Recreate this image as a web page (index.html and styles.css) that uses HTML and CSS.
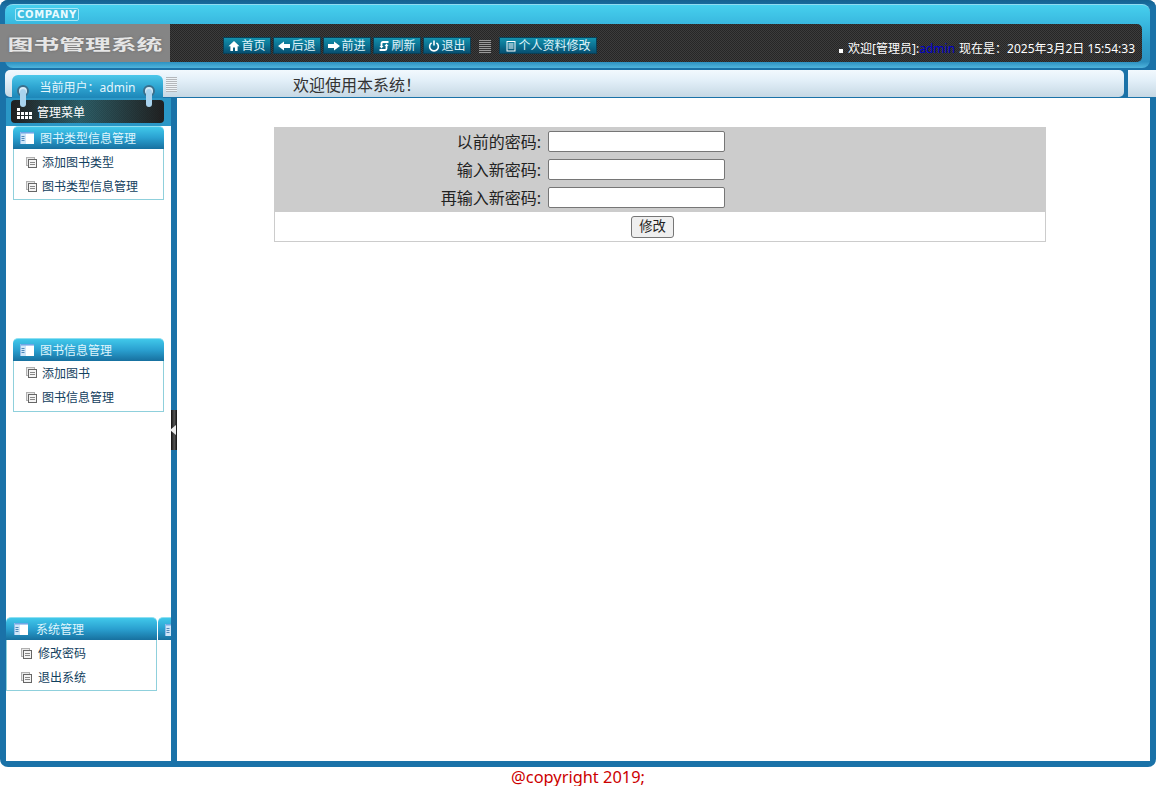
FILE: index.html
```html
<!DOCTYPE html>
<html lang="zh-CN">
<head>
<meta charset="utf-8">
<title>图书管理系统</title>
<link rel="stylesheet" href="styles.css">
</head>
<body>
<svg class="defs" width="0" height="0" aria-hidden="true">
  <symbol id="book" viewBox="0 0 14 12">
    <rect x="0" y="0" width="14" height="12" fill="#cfe6f8"/>
    <rect x="6" y="1.500" width="8" height="10.500" fill="#fff"/>
    <path d="M1.500 4.500h3M1.500 6.500h3M1.500 8.500h3" stroke="#4f88ba" fill="none"/>
    <rect x="0" y="0" width="14" height="1.500" fill="#6fa6e6"/>
    <rect x="0" y="0" width="1" height="12" fill="#8fbce8"/>
  </symbol>
  <symbol id="page" viewBox="0 0 11 11">
    <rect x="0.500" y="0.500" width="8" height="8" fill="#e8e8e8" stroke="#b0b0b0"/>
    <rect x="2.500" y="2.500" width="8" height="8" fill="#f4f4f4" stroke="#666"/>
    <path d="M4 5.500h5M4 7.500h5" stroke="#888" fill="none"/>
  </symbol>
</svg>
<div class="frame">
  <header class="head">
    <div class="head-inner">
      <div class="company"><span class="company-text">COMPANY</span></div>
      <div class="bar">
        <div class="logo"><span class="logo-text">图书管理系统</span></div>
        <nav class="tools">
          <a class="btn"><svg class="ico" viewBox="0 0 12 12"><path d="M6 1 .5 6.200H2.400V11H5V7.600h2V11h2.600V6.200h1.900z" fill="#fff"/></svg>首页</a>
          <a class="btn"><svg class="ico" viewBox="0 0 12 12"><path d="M0 6 6 1.500V4h6v4H6v2.500z" fill="#fff"/></svg>后退</a>
          <a class="btn"><svg class="ico" viewBox="0 0 12 12"><path d="M12 6 6 1.500V4H0v4h6v2.500z" fill="#fff"/></svg>前进</a>
          <a class="btn"><svg class="ico" viewBox="0 0 12 12"><path d="M10.500 2H5Q3.500 2 3.500 3.500V6M1.500 10H7Q8.500 10 8.500 8.500V6" stroke="#fff" stroke-width="1.800" fill="none"/><path d="M1.500 6h4L3.500 8.500zM6.500 6h4L8.500 3.500z" fill="#fff"/></svg>刷新</a>
          <a class="btn"><svg class="ico" viewBox="0 0 12 12"><path d="M3.600 2.800a4.400 4.400 0 1 0 4.800 0" stroke="#fff" stroke-width="1.600" fill="none"/><path d="M6 .5v5" stroke="#fff" stroke-width="1.600"/></svg>退出</a>
          <span class="grip grip-dark"></span>
          <a class="btn btn-wide"><svg class="ico" viewBox="0 0 12 12"><rect x="2" y="1.500" width="8" height="9.500" fill="none" stroke="#fff"/><path d="M3.500 4h5M3.500 6h5M3.500 8h5" stroke="#fff"/></svg>个人资料修改</a>
        </nav>
        <div class="welcome"><i class="dot"></i>欢迎[管理员]:<span class="who">admin</span> 现在是：2025年3月2日 15:54:33</div>
      </div>
    </div>
  </header>

  <div class="titlerow">
    <div class="title-panel">
      <div class="user-tab">当前用户：admin</div>
      <span class="grip grip-light"></span>
      <span class="title-text">欢迎使用本系统！</span>
    </div>
    <div class="title-end"></div>
    <span class="ring ring-l"></span>
    <span class="ring ring-r"></span>
  </div>

  <div class="main">
    <aside class="side">
      <div class="menu-band">
        <div class="menu-head">
          <svg class="menu-ico" viewBox="0 0 15 11"><path d="M0 0h3v3H0zM0 4h3v3H0zM4 4h3v3H4zM8 4h3v3H8zM12 4h3v3h-3zM0 8h3v3H0zM4 8h3v3H4zM8 8h3v3H8zM12 8h3v3h-3z" fill="#fff"/></svg>
          管理菜单
        </div>
      </div>
      <section class="group group-a">
        <h3 class="group-head"><svg class="book"><use href="#book"/></svg>图书类型信息管理</h3>
        <ul class="group-body">
          <li><svg class="page"><use href="#page"/></svg>添加图书类型</li>
          <li><svg class="page"><use href="#page"/></svg>图书类型信息管理</li>
        </ul>
      </section>
      <section class="group group-b">
        <h3 class="group-head"><svg class="book"><use href="#book"/></svg>图书信息管理</h3>
        <ul class="group-body">
          <li><svg class="page"><use href="#page"/></svg>添加图书</li>
          <li><svg class="page"><use href="#page"/></svg>图书信息管理</li>
        </ul>
      </section>
      <div class="bottom-row">
        <section class="group group-c">
          <h3 class="group-head"><svg class="book"><use href="#book"/></svg>系统管理</h3>
          <ul class="group-body">
            <li><svg class="page"><use href="#page"/></svg>修改密码</li>
            <li><svg class="page"><use href="#page"/></svg>退出系统</li>
          </ul>
        </section>
        <div class="peek"><svg class="book"><use href="#book"/></svg></div>
      </div>
    </aside>
    <div class="split"><div class="split-handle"><i class="split-arrow"></i></div></div>
    <main class="content">
      <form class="pw-form">
        <div class="pw-grey">
          <div class="pw-row"><label class="pw-label">以前的密码:</label><input class="pw-input" type="password"></div>
          <div class="pw-row"><label class="pw-label">输入新密码:</label><input class="pw-input" type="password"></div>
          <div class="pw-row"><label class="pw-label">再输入新密码:</label><input class="pw-input" type="password"></div>
        </div>
        <div class="pw-actions"><button class="pw-btn" type="button">修改</button></div>
      </form>
    </main>
  </div>
</div>
<footer class="foot">@copyright 2019;</footer>
</body>
</html>
```
FILE: styles.css
```css
* { box-sizing: border-box; }
html, body { margin: 0; padding: 0; height: 786px; overflow: hidden; background: #fff; }
body { font-family: "Noto Sans", "Noto Sans CJK SC", sans-serif; font-size: 12px; }
.defs { position: absolute; }

.frame {
  height: 767px;
  background: #1a72a8;
  border-radius: 8px;
  display: flex;
  flex-direction: column;
}

/* header */
.head { height: 70px; padding: 4px 6px 2px 5px; background: linear-gradient(#15628f, #1a72a8 10%, #1a72a8); border-radius: 8px 8px 0 0; }
.head-inner {
  height: 64px;
  border-radius: 8px;
  border-top: 1px solid #8fdcf0;
  background: linear-gradient(#46d0ee, #39b8df 30%, #2d9fcc 60%, #2c90c0 90%, #4fb4dc);
  padding-top: 3px;
}
.company {
  margin-left: 10px;
  width: 64px; height: 13px;
  border: 1px solid #a5e6f6;
  border-radius: 2px;
  background: #3fbfe2;
  display: flex; align-items: center; justify-content: center;
}
.company-text { font: bold 10px/11px "DejaVu Sans", sans-serif; letter-spacing: .6px; color: #e8fbff; }
.bar {
  margin: 3px 8px 0 -5px;
  height: 38px;
  display: flex;
  position: relative;
  border-radius: 0 5px 5px 0;
  background: repeating-conic-gradient(#3c3c3c 0 25%, #262626 0 50%) 0 0 / 2px 2px;
}
.logo { width: 170px; background: #858585; display: flex; align-items: center; justify-content: center; overflow: hidden; }
.logo-text {
  font: 700 15px/1 "Noto Sans CJK SC", sans-serif;
  color: #e6e6e6;
  transform: scaleX(1.72);
  white-space: nowrap;
  text-shadow: 0 0 2px #666;
}
.tools { display: flex; align-items: flex-start; gap: 2px; margin: 13px 0 0 53px; }
.btn {
  width: 48px; height: 17px;
  display: flex; align-items: center; justify-content: center; gap: 1px;
  color: #dff3fa;
  font-size: 12px; line-height: 16px;
  border: 1px solid #0a3f55;
  background: linear-gradient(#1391ad, #0b6f8f 55%, #074f70);
}
.btn-wide { width: 98px; }
.ico { width: 12px; height: 12px; flex: none; }
.grip { display: block; }
.grip-dark { width: 12px; height: 14px; margin: 3px 6px; background: repeating-linear-gradient(#9a9a9a 0 1px, #333 1px 2px); }
.welcome {
  position: absolute; right: 7px; top: 17px;
  color: #fff; font-size: 12px; line-height: 16px; white-space: nowrap;
  display: flex; align-items: center;
}
.dot { width: 4px; height: 4px; background: #fff; margin: 4px 5px 0 0; }
.who { color: #0000cd; margin-right: 4px; }

/* title row */
.titlerow { height: 28px; display: flex; position: relative; padding-left: 5px; z-index: 2; }
.title-panel {
  width: 1119px; height: 27px;
  padding-left: 7px;
  border-radius: 5px;
  background: linear-gradient(#f2f9fe, #e2eff8 40%, #c6d8e4);
  display: flex; align-items: flex-start;
}
.user-tab {
  margin-top: 5px;
  flex: none;
  width: 151px; height: 23px;
  border-radius: 6px 6px 0 0;
  background: linear-gradient(#4cc8ea, #2fa6d2 50%, #1d86b8);
  color: #e4f6fc;
  font-size: 12px;
  line-height: 25px; text-align: center;
}
.grip-light { width: 11px; height: 15px; margin: 7px 0 0 3px; background: repeating-linear-gradient(#b4b8bc 0 1px, #eef4f8 1px 2px); }
.title-text { font-size: 16px; color: #333; margin-left: 116px; line-height: 30px; }
.title-end { margin-left: 4px; width: 28px; height: 27px; background: linear-gradient(#f2f9fe, #e2eff8 40%, #c6d8e4); }
.ring {
  position: absolute; top: 15px; width: 12px; height: 12px;
  border-radius: 50%; border: 2px solid #3a6f8c; background: #d8ecf8;
}
.ring::after {
  content: ""; position: absolute; left: 1px; top: 2px; width: 6px; height: 18px;
  background: #a9d3ee; border-radius: 3px;
}
.ring-l { left: 17px; }
.ring-r { left: 143px; }

/* main */
.main { flex: 1; display: flex; padding: 0 6px 6px; min-height: 0; }
.side { width: 165px; background: #fff; display: flex; flex-direction: column; }
.menu-band { height: 28px; padding: 2px 7px 3px 5px; background: #2a97c6; }
.menu-head {
  height: 23px;
  border-radius: 4px;
  background:
    linear-gradient(90deg, rgba(30,30,30,.9), rgba(40,120,135,.6) 45%, rgba(30,30,30,.9)),
    repeating-conic-gradient(#3c3c3c 0 25%, #262626 0 50%) 0 0 / 2px 2px;
  color: #fff; font-size: 12px;
  display: flex; align-items: center;
  padding-left: 6px; gap: 5px;
}
.menu-ico { width: 15px; height: 11px; margin-top: 3px; }

.group { width: 151px; }
.group-a { margin-left: 7px; }
.group-b { margin: 138px 0 0 7px; }
.group-head {
  margin: 0; height: 23px;
  border-radius: 5px 5px 0 0;
  border-top: 1px solid #8fe0f2;
  background: linear-gradient(#40c8ea, #2aa0d0 50%, #17709f);
  color: #dff5fc;
  font-size: 12px; font-weight: normal;
  display: flex; align-items: center;
  padding: 0 0 0 7px; gap: 6px;
}
.book { width: 14px; height: 12px; flex: none; }
.group-body {
  list-style: none; margin: 0; padding: 0;
  height: 51px;
  border: 1px solid #8fd0dc; border-top: 0;
  background: #fff;
}
.group-body li {
  height: 24px;
  display: flex; align-items: center;
  padding: 2px 0 0 12px; gap: 5px;
  color: #12405e; font-size: 12px;
}
.group-b .group-body li:first-child { height: 23px; padding-top: 0; }
.page { width: 11px; height: 11px; flex: none; }
.bottom-row { display: flex; margin-top: 205px; gap: 1px; }
.group-c .group-head { padding-left: 8px; gap: 8px; }
.group-c .group-body li { padding-left: 14px; gap: 6px; }
.peek {
  width: 13px; height: 23px;
  border-radius: 5px 0 0 0;
  border-top: 1px solid #8fe0f2;
  background: linear-gradient(#40c8ea, #2aa0d0 50%, #17709f);
  padding: 5px 0 0 7px;
  overflow: hidden;
}

/* splitter */
.split { width: 6px; position: relative; }
.split-handle {
  position: absolute; top: 312px; left: 0;
  width: 6px; height: 40px;
  background: linear-gradient(90deg, #111, #555 55%, #111);
}
.split-arrow {
  position: absolute; left: -1px; top: 15px;
  border: 5px solid transparent; border-left: 0; border-right: 6px solid #eee;
}

/* form */
.content { flex: 1; background: #fff; padding: 29px 0 0 97px; }
.pw-form { width: 772px; display: block; }
.pw-grey { background: #ccc; height: 85px; padding-top: 4px; display: flex; flex-direction: column; gap: 7px; }
.pw-row { display: flex; align-items: center; height: 21px; }
.pw-label { width: 267px; margin-top: 2px; text-align: right; font-size: 16px; color: #222; line-height: 21px; }
.pw-input {
  margin-left: 7px; width: 177px; height: 21px;
  border: 1px solid #767676; border-radius: 2px; background: #fff; padding: 1px 2px;
}
.pw-actions { height: 30px; border: 1px solid #ccc; border-top: 0; display: flex; justify-content: center; padding: 4px 15px 0 0; }
.pw-btn {
  width: 43px; height: 22px; padding: 0;
  font: 13.33px/1 "Noto Sans", "Noto Sans CJK SC", sans-serif; color: #222;
  border: 1px solid #767676; border-radius: 3px; background: #efefef;
}

.foot { height: 19px; text-align: center; color: #c00; font-size: 16.4px; line-height: 19px; }
```
